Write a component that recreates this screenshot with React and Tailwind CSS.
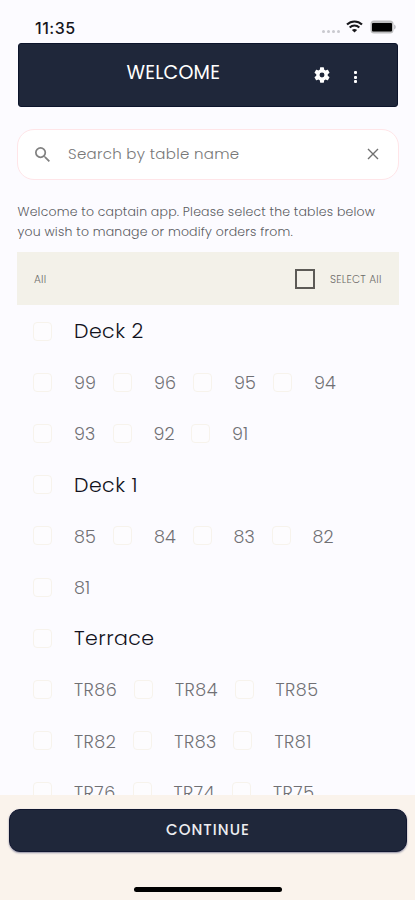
const groups = [
  {
    name: "Deck 2",
    spacing: "tracking-[0.15px]",
    rows: [
      [["99", 80], ["96", 80], ["95", 80], ["94", 80]],
      [["93", 79.5], ["92", 78.5], ["91", 80]],
    ],
  },
  {
    name: "Deck 1",
    spacing: "tracking-[0.15px]",
    rows: [
      [["85", 80], ["84", 79.5], ["83", 79], ["82", 80]],
      [["81", 80]],
    ],
  },
  {
    name: "Terrace",
    spacing: "tracking-[0.5px]",
    rows: [
      [["TR86", 101], ["TR84", 100.5], ["TR85", 100]],
      [["TR82", 100.3], ["TR83", 100.2], ["TR81", 100]],
      [["TR76", 99.5], ["TR74", 99.5], ["TR75", 100]],
    ],
  },
];

function Checkbox() {
  return <span className="-ml-px block size-[19px] shrink-0 rounded-[4px] border border-[#f7f3ec] bg-[#fdfcfe]" />;
}

function StatusBar() {
  return (
    <div className="flex h-[43px] shrink-0 items-start justify-between pt-[18px] pr-[19px] pl-[35px]">
      <span className="font-[Inter,sans-serif] text-[16px] leading-[20px] font-medium tracking-[0.500px] text-[#16161c]">11:35</span>
      <div className="mt-px flex items-center">
        <div className="mt-[9px] flex gap-[2px]">
          {[0, 1, 2, 3].map((i) => (
            <span key={i} className="size-[3px] rounded-full bg-[#c9c9cf]" />
          ))}
        </div>
        <svg className="ml-[6px] h-[13px] w-[17px]" viewBox="0 0 17 13" fill="none" stroke="#17171b" strokeWidth="2.1">
          <path d="M1 4.6C5.2.4 11.800.4 16 4.600" />
          <path d="M3.700 7.500C6.400 4.900 10.600 4.900 13.300 7.500" />
          <path d="M8.500 12.600 5.900 9.900C7.400 8.600 9.600 8.600 11.100 9.900Z" fill="#17171b" stroke="none" />
        </svg>
        <svg className="mt-px ml-[7px] h-[14px] w-[26px]" viewBox="0 0 26 14">
          <rect x=".5" y=".5" width="23" height="13" rx="3.500" fill="#bdbdbf" />
          <rect x="2" y="3" width="20" height="8.500" rx="1" fill="#000" />
          <path d="M24.300 4.500C26 5.300 26 8.700 24.300 9.500Z" fill="#aaaab0" />
        </svg>
      </div>
    </div>
  );
}

function Header() {
  return (
    <header className="mr-[17px] ml-[17.500px] flex h-[64px] shrink-0 items-center rounded-[3px] border border-[#0c142b] bg-[#1f273a] text-white">
      <h1 className="ml-[108px] w-[188px] pb-[4px] text-[19px] leading-6 font-normal tracking-[0.200px]">WELCOME</h1>
      <svg className="-ml-px size-[16px]" viewBox="2 2 20 20" fill="currentColor">
        <path d="M19.140 12.940c.04-.3.060-.61.060-.94 0-.32-.02-.64-.07-.94l2.030-1.580a.49.49 0 0 0 .12-.61l-1.920-3.320a.488.488 0 0 0-.59-.22l-2.390.96c-.5-.38-1.030-.7-1.620-.94l-.36-2.540a.484.484 0 0 0-.48-.41h-3.840c-.24 0-.43.17-.47.41l-.36 2.540c-.59.24-1.130.57-1.620.94l-2.390-.96c-.22-.08-.47 0-.59.22L2.740 8.870c-.12.21-.08.47.12.61l2.030 1.580c-.05.3-.09.63-.09.94s.02.64.07.94l-2.030 1.580a.49.49 0 0 0-.12.61l1.920 3.320c.12.22.37.29.59.22l2.390-.96c.5.38 1.030.7 1.620.94l.36 2.540c.05.24.24.41.48.41h3.840c.24 0 .44-.17.47-.41l.36-2.540c.59-.24 1.130-.56 1.620-.94l2.390.96c.22.08.47 0 .59-.22l1.920-3.320c.12-.22.070-.47-.12-.61l-2.010-1.580zM12 15.100a3.100 3.100 0 1 1 0-6.200 3.100 3.100 0 0 1 0 6.200z" />
      </svg>
      <div className="mt-[4px] ml-[24.500px] flex flex-col gap-[1.500px]">
        {[0, 1, 2].map((i) => (
          <span key={i} className="size-[3px] rounded-[1px] bg-white" />
        ))}
      </div>
    </header>
  );
}

function Search() {
  return (
    <div className="mt-[22px] mr-[16px] ml-[17px] flex h-[51px] shrink-0 items-center rounded-[17px] border border-[#ffe5e8] bg-white pr-[19px] pl-[17px]">
      <svg className="-mt-px size-[15px] text-[#808080]" viewBox="3 3 17.500 17.500" fill="currentColor">
        <path d="M15.500 14h-.79l-.28-.27A6.470 6.470 0 0 0 16 9.500 6.500 6.500 0 1 0 9.500 16c1.610 0 3.090-.59 4.230-1.570l.27.28v.79l5 4.990L20.490 19l-4.990-5zm-6 0C7.010 14 5 11.990 5 9.500S7.010 5 9.500 5 14 7.010 14 9.500 11.990 14 9.500 14z" />
      </svg>
      <span className="-mt-[2px] ml-[18px] text-[15px] leading-5 font-light tracking-[0.300px] whitespace-nowrap text-[#777]">Search by table name</span>
      <svg className="-mt-px ml-auto size-[12px]" viewBox="0 0 12 12" fill="none" stroke="#707070" strokeWidth="1.400">
        <path d="m1 1 10 10M11 1 1 11" />
      </svg>
    </div>
  );
}

export default function App() {
  return (
    <div className="flex h-[900px] w-full flex-col overflow-hidden bg-[#fcfbff] font-[Poppins,Inter,sans-serif]">
      <StatusBar />
      <Header />
      <Search />
      <p className="mt-[22px] ml-[17.500px] h-[50px] shrink-0 text-[12.500px] leading-[20px] font-light whitespace-nowrap text-[#5b5b5f]">
        <span className="block tracking-[0.190px]">Welcome to captain app. Please select the tables below</span>
        <span className="block tracking-[0.200px]">you wish to manage or modify orders from.</span>
      </p>
      <div className="mr-[16px] ml-[17px] flex h-[53px] shrink-0 items-center bg-[#f3f1e9] pr-[17px] pl-[17px] text-[10.500px] font-light text-[#6c6b68]">
        <span className="mt-[2px] tracking-[0.250px]">All</span>
        <span className="ml-auto size-[20px] border-2 border-[#5c5a56]" />
        <span className="mt-[2px] ml-[15px] w-[52px] tracking-[0.250px] whitespace-nowrap">SELECT All</span>
      </div>
      <main className="min-h-0 flex-1 overflow-hidden pt-[0.500px] pl-[34px]">
        {groups.map((group) => (
          <section key={group.name}>
            <div className="flex h-[51.200px] items-center gap-[22px]">
              <Checkbox />
              <h2 className="text-[20.500px] leading-6 font-light tracking-[0.450px] text-[#12121c]">{group.name}</h2>
            </div>
            {group.rows.map((row) => (
              <div key={row[0][0]} className="flex h-[51.200px] items-center">
                {row.map(([label, width]) => (
                  <label key={label} className="flex shrink-0 items-center gap-[22px]" style={{ width }}>
                    <Checkbox />
                    <span className={`pt-[2px] text-[17.500px] leading-6 font-light text-[#707074] ${group.spacing}`}>{label}</span>
                  </label>
                ))}
              </div>
            ))}
          </section>
        ))}
      </main>
      <footer className="flex h-[105px] shrink-0 flex-col items-center bg-[#faf3ec] pt-[14px]">
        <button className="ml-[1px] h-[43px] w-[398px] rounded-[11px] border border-[#10162f] bg-[#1f273a] text-[15px] font-medium tracking-[1.050px] text-[#ededf0] shadow-[0_1px_2px_#8b8ba0]">CONTINUE</button>
        <span className="mt-[34.500px] block h-[5.500px] w-[148px] rounded-full bg-black" />
      </footer>
    </div>
  );
}
